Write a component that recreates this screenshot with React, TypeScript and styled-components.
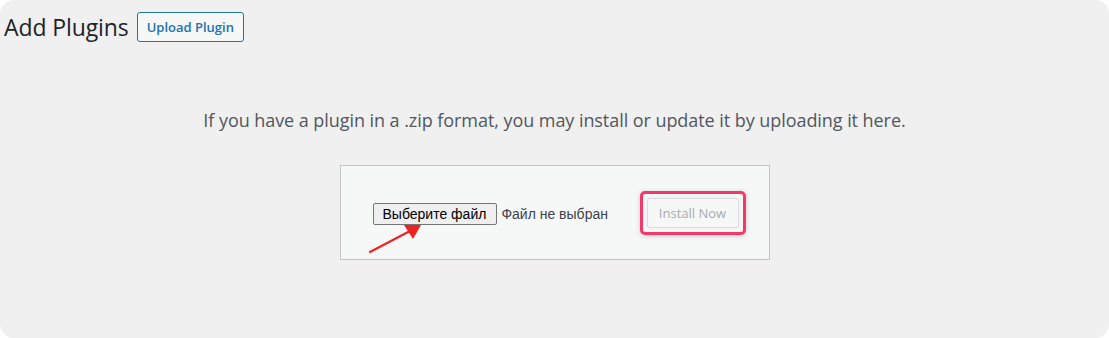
import React from 'react'
import styled, { createGlobalStyle } from 'styled-components'

const Global = createGlobalStyle`
  html, body { margin: 0; padding: 0; background: #fff; }
  body { font-family: 'Open Sans', 'Noto Sans', sans-serif; }
`

const Page = styled.div`
  width: 1109px;
  height: 338px;
  box-sizing: border-box;
  background: #f0f0f1;
  border-radius: 14px;
  overflow: hidden;
  padding: 11px 0 0 4px;
`

const Header = styled.div`
  display: flex;
  align-items: center;
  gap: 8px;
`

const Title = styled.h1`
  margin: 0;
  font-size: 23px;
  font-weight: 400;
  color: #1d2327;
  letter-spacing: -0.1px;
`

const PageAction = styled.button`
  height: 30px;
  padding: 0 9px;
  border: 1px solid #2271b1;
  border-radius: 3px;
  background: #f6f7f7;
  color: #2271b1;
  font-family: 'Open Sans', sans-serif;
  font-size: 13px;
  font-weight: 600;
  cursor: pointer;
`

const Body = styled.div`
  display: flex;
  flex-direction: column;
  align-items: center;
  padding-right: 4px;
`

const Help = styled.p`
  margin: 65px 0 32px;
  font-size: 18px;
  line-height: 25px;
  color: #50575e;
  letter-spacing: -0.06px;
`

const UploadForm = styled.form`
  position: relative;
  width: 430px;
  box-sizing: border-box;
  padding: 25px 23px 24px 32px;
  background: #f6f7f7;
  border: 1px solid #c3c4c7;
  display: flex;
  align-items: center;
  justify-content: space-between;
`

const FileField = styled.div`
  display: flex;
  align-items: center;
  gap: 4px;
  margin-top: 1px;
`

const FileButton = styled.button`
  height: 22px;
  padding: 0 10px 0 9px;
  border: 1px solid #767676;
  border-radius: 2px;
  background: #efefef;
  color: #000;
  font-family: 'Liberation Sans', Arial, sans-serif;
  font-size: 14px;
`

const FileName = styled.span`
  font-family: 'Liberation Sans', Arial, sans-serif;
  font-size: 14px;
  color: #3c434a;
`

const Highlight = styled.div`
  padding: 4px;
  border: 3px solid #f5386c;
  border-radius: 5px;
  box-shadow: 0 1px 5px rgba(0, 0, 0, 0.18);
`

const InstallButton = styled.button`
  height: 30px;
  width: 92px;
  border: 1px solid #dcdcde;
  border-radius: 3px;
  background: #f6f7f7;
  color: #a7aaad;
  font-family: 'Open Sans', sans-serif;
  font-size: 13px;
  box-shadow: 0 0 2px rgba(0, 0, 0, 0.08);
`

const Arrow = styled.svg`
  position: absolute;
  left: 27px;
  top: 56px;
  overflow: visible;
`

export default function App() {
  return (
    <>
      <Global />
      <Page>
        <Header>
          <Title>Add Plugins</Title>
          <PageAction type="button">Upload Plugin</PageAction>
        </Header>
        <Body>
          <Help>If you have a plugin in a .zip format, you may install or update it by uploading it here.</Help>
          <UploadForm onSubmit={(e) => e.preventDefault()}>
            <FileField>
              <FileButton type="button">Выберите файл</FileButton>
              <FileName>Файл не выбран</FileName>
            </FileField>
            <Highlight>
              <InstallButton type="submit" disabled>Install Now</InstallButton>
            </Highlight>
            <Arrow width="60" height="40" viewBox="0 0 60 40">
              <line x1="2" y1="30" x2="42" y2="9" stroke="#ec2323" strokeWidth="2.2" strokeLinecap="round" />
              <polygon points="53,3 36,3 45,17" fill="#ec2323" />
            </Arrow>
          </UploadForm>
        </Body>
      </Page>
    </>
  )
}
